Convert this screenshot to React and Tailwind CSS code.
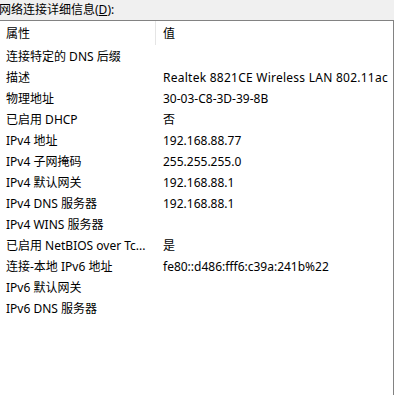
import React from 'react';

const rows = [
    ['连接特定的 DNS 后缀', ''],
    ['描述', 'Realtek 8821CE Wireless LAN 802.11ac'],
    ['物理地址', '30-03-C8-3D-39-8B'],
    ['已启用 DHCP', '否'],
    ['IPv4 地址', '192.168.88.77'],
    ['IPv4 子网掩码', '255.255.255.0'],
    ['IPv4 默认网关', '192.168.88.1'],
    ['IPv4 DNS 服务器', '192.168.88.1'],
    ['IPv4 WINS 服务器', ''],
    ['已启用 NetBIOS over Tc...', '是'],
    ['连接-本地 IPv6 地址', 'fe80::d486:fff6:c39a:241b%22'],
    ['IPv6 默认网关', ''],
    ['IPv6 DNS 服务器', ''],
];

const App = () => {
    return (
        <div className="w-[394px] h-[395px] bg-[#f0f0f0] flex flex-col text-[12px] text-black font-['Noto_Sans','Noto_Sans_CJK_SC',sans-serif] overflow-hidden">
            {/* label */}
            <div className="h-[20px] flex items-center ml-[-1px] leading-none">
                网络连接详细信息(<span className="underline">D</span>):
            </div>

            {/* list view */}
            <div className="flex-1 bg-white border-t border-r border-[#828282] flex flex-col">
                <div className="h-[25px] flex items-center">
                    <div className="w-[155px] pl-[6px]">属性</div>
                    <div className="w-px h-[24px] bg-[#e5e5e5] self-start"></div>
                    <div className="pl-[7px]">值</div>
                </div>
                {rows.map(([k, v]) => (
                    <div key={k} className="h-[21px] flex items-center whitespace-nowrap">
                        <div className="w-[163px] pl-[6px]">{k}</div>
                        <div className={v.startsWith('Realtek') ? 'tracking-[0.25px]' : ''}>{v}</div>
                    </div>
                ))}
            </div>
        </div>
    );
};

export default App;
